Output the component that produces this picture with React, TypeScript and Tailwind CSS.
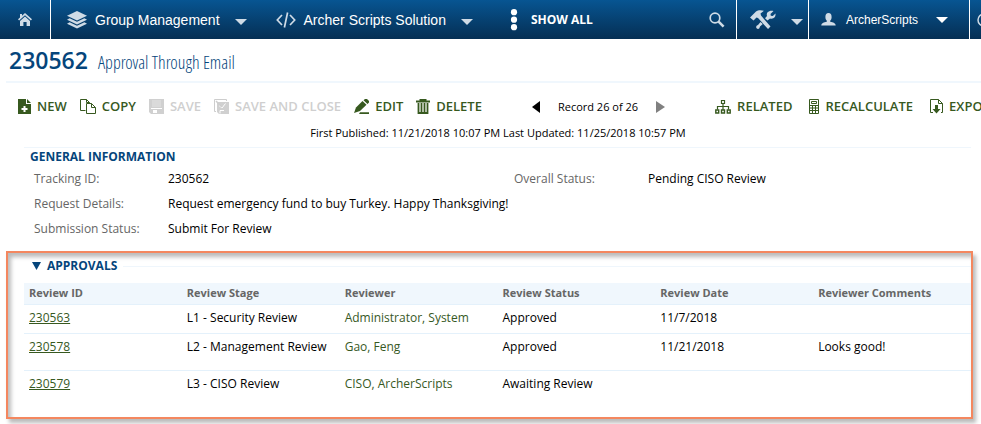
import type { ReactNode } from 'react';

type IconProps = { className?: string };

const HomeIcon = () => (
  <svg width="14" height="13" viewBox="0 0 14 13" fill="#cfdbe6">
    <path d="M7 0 14 6.2 12.9 7.4 7 2.2 1.1 7.4 0 6.2 2 4.4V1h2v1.7Z" />
    <path d="M7 3.6 12 8v5H8.6V9H5.4v4H2V8Z" />
  </svg>
);

const LayersIcon = () => (
  <svg width="22" height="18" viewBox="0 0 22 18" fill="#cfdbe6">
    <path d="M11 0 21 4.8 11 9.6 1 4.8Z" />
    <path d="M3.6 7.2 11 10.8 18.4 7.2 21 8.8 11 13.6 1 8.8Z" />
    <path d="M3.6 11.2 11 14.8 18.4 11.2 21 12.8 11 17.6 1 12.8Z" />
  </svg>
);

const CodeIcon = () => (
  <svg width="20" height="16" viewBox="0 0 20 16" fill="none" stroke="#cfdbe6" strokeWidth="1.7">
    <path d="M6 3 1.3 8 6 13M14 3l4.7 5L14 13M11.6.5 8.4 15.5" />
  </svg>
);

const DotsIcon = () => (
  <svg width="8" height="22" viewBox="0 0 8 22" fill="#fff">
    <circle cx="4" cy="3.2" r="3.1" />
    <circle cx="4" cy="10.7" r="3.1" />
    <circle cx="4" cy="18.2" r="3.1" />
  </svg>
);

const SearchIcon = () => (
  <svg width="16" height="16" viewBox="0 0 16 16" fill="none" stroke="#cfdbe6">
    <circle cx="6" cy="6" r="4.8" strokeWidth="1.7" />
    <path d="m9.6 9.6 5 5" strokeWidth="2.6" />
  </svg>
);

const ToolsIcon = () => (
  <svg width="26" height="20" viewBox="0 0 26 20" fill="#cfdbe6">
    <path d="M0 7.5 6 1.5C8 0 11 0 14 .8L10.5 3.5 11 5.5 20.5 16.5 18 19 8 8 6.5 7.5 3.5 10.5Z" />
    <path d="M23.5 1 20.5 4l.3 1.8 2 .2L25.5 3.5C26 7 23.5 9.5 20 8.5L17.5 10.5 15 8.3 17 6C16 3 18.5.2 23.5 1Z" />
    <path d="M10.5 12 12.8 14 10 16.5C9.5 19 8 19.5 6.8 18.5 5.5 17.2 6.2 15.5 8 15Z" />
  </svg>
);

const UserIcon = () => (
  <svg width="15" height="13" viewBox="0 0 15 13" fill="#cfdbe6">
    <ellipse cx="7.5" cy="4" rx="3.1" ry="3.9" />
    <path d="M5.8 7h3.4v1.8c3 .6 5.5 1.4 5.5 3.7H.3c0-2.3 2.5-3.1 5.5-3.7Z" />
  </svg>
);

const Caret = ({ className }: IconProps) => (
  <svg className={className} width="12" height="6" viewBox="0 0 12 6" fill="currentColor">
    <path d="M0 0h12L6 6Z" />
  </svg>
);

const NewIcon = () => (
  <svg width="13" height="15" viewBox="0 0 13 15">
    <path d="M0 0h8v5h5v10H0Z" fill="#37591f" />
    <path d="M9 0 13 4H9Z" fill="#37591f" />
    <path d="M6.5 7v6M3.5 10h6" stroke="#fff" strokeWidth="2" />
  </svg>
);

const CopyIcon = () => (
  <svg width="16" height="15" viewBox="0 0 16 15" fill="none" stroke="#37591f">
    <path d="M5.5 11.5h-5V.5h6l3 3V5M6.5.5v3h3" />
    <path d="M6.5 4.5h5l4 4v6h-9ZM11.5 4.5v4h4" fill="#fff" />
  </svg>
);

const SaveIcon = () => (
  <svg width="15" height="15" viewBox="0 0 15 15" fill="#d0d0d0">
    <path d="M0 0h15v15H2L0 13Z" />
    <path d="M3 1h9v7H3Z" fill="#dadada" />
    <path d="M2 9h11v1H2ZM4 11h4v3H4Z" fill="#fff" />
  </svg>
);

const SaveCloseIcon = () => (
  <svg width="15" height="15" viewBox="0 0 15 15" fill="none" stroke="#cdcdcd">
    <path d="M2 12.5H.5V.5h12V2" />
    <path d="M3 3h12v12H5l-2-2Z" fill="#d0d0d0" stroke="none" />
    <path d="M5 6.5 8 9l3.5-4.500M6 14.5v-3h4" stroke="#fff" />
    <path d="m2 2 6 6" strokeWidth="1.5" />
  </svg>
);

const EditIcon = () => (
  <svg width="15" height="15" viewBox="0 0 15 15" fill="#37591f">
    <path d="M0 14 2 8.5 8.5 2 12.5 5.8 6 12Z" />
    <path d="M9.5 1.2 11 0h2l2 2v1.6L13.5 5ZM6 13.2h9V15H5Z" />
  </svg>
);

const TrashIcon = () => (
  <svg width="14" height="15" viewBox="0 0 14 15" fill="none" stroke="#37591f">
    <path d="M0 2.5h14M4.5 2V.7h5V2" strokeWidth="2" />
    <path d="M2.5 4v10h9V4M5.5 4v10M8.5 4v10" strokeWidth="1.8" />
  </svg>
);

const RelatedIcon = () => (
  <svg width="16" height="15" viewBox="0 0 16 15" fill="none" stroke="#37591f">
    <path d="M6.5 1.5h3v3h-3ZM8 5v6M2.5 10.5v-3h11v3" strokeWidth="1.2" />
    <path d="M.8 11h2.9v3H.8ZM6.5 11h3v3h-3ZM12.3 11h2.900v3h-2.900Z" strokeWidth="1.4" />
  </svg>
);

const CalcIcon = () => (
  <svg width="10" height="15" viewBox="0 0 10 15" fill="none" stroke="#37591f">
    <path d="M.5.5h9v14h-9ZM2.5 2.5h5v2h-5Z" />
    <path d="M1 6.5h8M1 9h8M1 11.5h8M3.5 6.5v8M6.5 6.5v8" />
  </svg>
);

const ExportIcon = () => (
  <svg width="13" height="15" viewBox="0 0 13 15" fill="none" stroke="#37591f">
    <path d="M3 13.5H.5V.5h8l4 4v9H11M8.5.5v4h4" />
    <path d="M5 6h3v4h2.5l-4 4.5L2.5 10H5Z" fill="#37591f" stroke="none" />
  </svg>
);

type ToolButtonProps = { icon: ReactNode; label: string; disabled?: boolean };

function ToolButton({ icon, label, disabled }: ToolButtonProps) {
  return (
    <button
      type="button"
      disabled={disabled}
      className="flex shrink-0 items-center gap-[6px] text-[13px] leading-5 font-semibold text-[#37591f] disabled:text-[#cfcfcf]"
    >
      {icon}
      {label}
    </button>
  );
}

type FieldProps = { label: string; value: string };

function Field({ label, value }: FieldProps) {
  return (
    <div className="flex">
      <dt className="w-[134px] text-[#666]">{label}</dt>
      <dd>{value}</dd>
    </div>
  );
}

const COLUMNS = ['Review ID', 'Review Stage', 'Reviewer', 'Review Status', 'Review Date', 'Reviewer Comments'];

const REVIEWS = [
  { id: '230563', stage: 'L1 - Security Review', reviewer: 'Administrator, System', status: 'Approved', date: '11/7/2018', comments: '' },
  { id: '230578', stage: 'L2 - Management Review', reviewer: 'Gao, Feng', status: 'Approved', date: '11/21/2018', comments: 'Looks good!' },
  { id: '230579', stage: 'L3 - CISO Review', reviewer: 'CISO, ArcherScripts', status: 'Awaiting Review', date: '', comments: '' },
];

function NavBar() {
  return (
    <nav className="flex h-[39px] items-stretch overflow-hidden bg-linear-to-b from-[#075592] to-[#052f54] font-['Liberation_Sans',sans-serif] text-[14px] whitespace-nowrap text-white">
      <button type="button" aria-label="Home" className="flex w-[51px] shrink-0 items-center justify-center border-r border-white">
        <HomeIcon />
      </button>
      <button type="button" className="flex shrink-0 items-center pl-[15px]">
        <LayersIcon />
        <span className="ml-[7px]">Group Management</span>
        <Caret className="mt-1 ml-[15px] text-[#cfdbe6]" />
      </button>
      <button type="button" className="flex shrink-0 items-center pl-[29px]">
        <CodeIcon />
        <span className="ml-2">Archer Scripts Solution</span>
        <Caret className="mt-1 ml-[15px] text-[#cfdbe6]" />
      </button>
      <button type="button" className="flex shrink-0 items-center gap-[13px] pl-[37px] font-['Open_Sans',sans-serif] text-[12px] font-bold">
        <DotsIcon />
        SHOW ALL
      </button>
      <div className="ml-auto flex shrink-0">
        <button type="button" aria-label="Search" className="flex items-center pr-[11px]">
          <SearchIcon />
        </button>
        <button type="button" aria-label="Administration" className="flex w-[72px] items-center border-l border-white pl-[13px]">
          <ToolsIcon />
          <Caret className="mt-1 ml-[15px] text-[#cfdbe6]" />
        </button>
        <button type="button" className="flex w-[162px] items-center border-x border-white pl-3 text-[12px]">
          <UserIcon />
          <span className="ml-[10px]">ArcherScripts</span>
          <Caret className="ml-[18px]" />
        </button>
        <button type="button" aria-label="Help" className="flex w-[11px] items-center overflow-hidden pl-[7px]">
          <svg className="shrink-0" width="14" height="14" viewBox="0 0 14 14" fill="none" stroke="#cfdbe6" strokeWidth="1.5">
            <circle cx="7" cy="7" r="6" />
          </svg>
        </button>
      </div>
    </nav>
  );
}

function Toolbar() {
  return (
    <div className="flex h-7 items-center gap-[13px] overflow-hidden pl-[18px] whitespace-nowrap">
      <ToolButton icon={<NewIcon />} label="NEW" />
      <ToolButton icon={<CopyIcon />} label="COPY" />
      <ToolButton icon={<SaveIcon />} label="SAVE" disabled />
      <ToolButton icon={<SaveCloseIcon />} label="SAVE AND CLOSE" disabled />
      <ToolButton icon={<EditIcon />} label="EDIT" />
      <ToolButton icon={<TrashIcon />} label="DELETE" />
      <div className="ml-[37px] flex shrink-0 items-center gap-[18px] pt-[2px] text-[11px]">
        <button type="button" aria-label="Previous record">
          <svg width="8" height="12" viewBox="0 0 8 12">
            <path d="M8 0v12L0 6Z" />
          </svg>
        </button>
        <span>Record 26 of 26</span>
        <button type="button" aria-label="Next record">
          <svg width="9" height="12" viewBox="0 0 9 12" fill="#808080">
            <path d="M0 0v12l9-6Z" />
          </svg>
        </button>
      </div>
      <div className="ml-[37px] flex shrink-0 gap-[17px]">
        <ToolButton icon={<RelatedIcon />} label="RELATED" />
        <ToolButton icon={<CalcIcon />} label="RECALCULATE" />
        <ToolButton icon={<ExportIcon />} label="EXPO" />
      </div>
    </div>
  );
}

function Approvals() {
  return (
    <section className="mt-[13px] mr-2 ml-[6px] border-2 border-[#f4875f] pb-[10px] pl-4 shadow-[3px_4px_4px_#bbb,inset_3px_4px_4px_#bbb]">
      <div className="mb-1 flex h-[26px] items-center gap-[6px] pl-2">
        <button type="button" className="flex items-center gap-[6px] font-bold text-[#05457b]">
          <svg width="9" height="8" viewBox="0 0 9 8" fill="currentColor">
            <path d="M0 0h9L4.5 8Z" />
          </svg>
          APPROVALS
        </button>
        <div className="h-px flex-1 bg-[#eff6fc]" />
      </div>
      <table className="w-full table-fixed text-left">
        <thead>
          <tr className="h-[21px] border-b border-[#e4f1fb] bg-[#f0f7fd] text-[11px] text-[#666]">
            {COLUMNS.map((column) => (
              <th key={column} className="pl-[5px] font-bold">{column}</th>
            ))}
          </tr>
        </thead>
        <tbody>
          {REVIEWS.map((review) => (
            <tr key={review.id} className="border-b border-[#e4f1fb] align-top last:border-0 [&>td]:pt-1 [&>td]:pb-[6px] [&>td]:pl-[5px] not-first:[&>td]:pb-[14px]">
              <td><a href={`#${review.id}`} className="text-[#37591f] underline">{review.id}</a></td>
              <td>{review.stage}</td>
              <td><a href="#reviewer" className="text-[#37591f]">{review.reviewer}</a></td>
              <td>{review.status}</td>
              <td>{review.date}</td>
              <td>{review.comments}</td>
            </tr>
          ))}
        </tbody>
      </table>
    </section>
  );
}

export default function App() {
  return (
    <div className="overflow-hidden bg-white pb-2 font-['Open_Sans',sans-serif] text-[12px] leading-[18px] text-black">
      <NavBar />
      <header className="ml-[6px] flex h-[44px] items-center gap-[10px] border-b-2 border-[#f0f7fd] pl-[3px] text-[#05457b]">
        <h1 className="text-[23px] font-semibold">230562</h1>
        <span className="pt-[3px] font-['Open_Sans_Condensed_Light','Open_Sans_Condensed','Open_Sans',sans-serif] text-[18px] font-light">
          Approval Through Email
        </span>
      </header>
      <div className="pt-[9px]">
        <Toolbar />
        <p className="pt-1 pr-[5px] pl-5 text-center text-[11px]">
          First Published: 11/21/2018 10:07 PM Last Updated: 11/25/2018 10:57 PM
        </p>
      </div>
      <section className="mt-[5px] mr-[10px] ml-6 border-t border-[#eff6fc]">
        <h2 className="pl-[6px] font-bold text-[#05457b]">GENERAL INFORMATION</h2>
        <dl className="flex flex-col gap-[7px] pt-1 pl-[10px]">
          <div className="grid grid-cols-[480px_1fr]">
            <Field label="Tracking ID:" value="230562" />
            <Field label="Overall Status:" value="Pending CISO Review" />
          </div>
          <Field label="Request Details:" value="Request emergency fund to buy Turkey. Happy Thanksgiving!" />
          <Field label="Submission Status:" value="Submit For Review" />
        </dl>
      </section>
      <Approvals />
    </div>
  );
}
